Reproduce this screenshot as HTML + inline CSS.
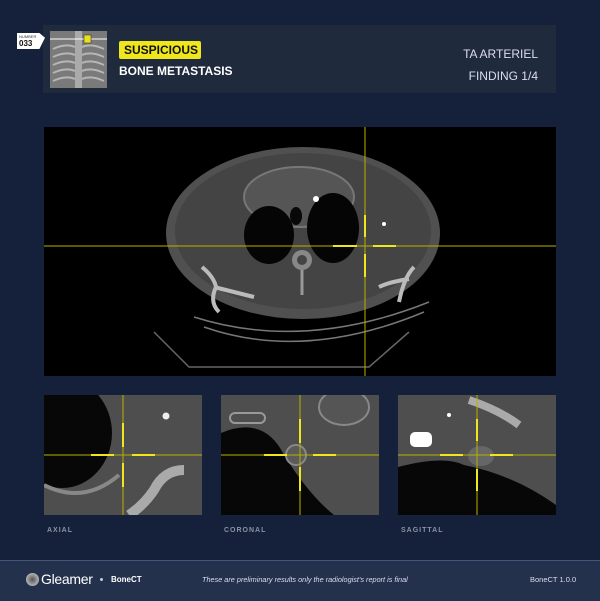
<!DOCTYPE html><html><head><style>
body{margin:0;width:600px;height:600px;background:#15203a;font-family:"Liberation Sans",sans-serif;position:relative;overflow:hidden}
.a{position:absolute}
.lbl{font-size:7px;color:#8a93a5;font-weight:bold;letter-spacing:1px}
</style></head><body>
<div class="a" style="left:43px;top:25px;width:513px;height:68px;background:#1f2a3d"></div>
<div class="a" style="left:50px;top:31px;width:57px;height:57px;background:#777;overflow:hidden">
<svg width="57" height="57"><rect width="57" height="57" fill="#7a7a7a"/><g stroke="#ddd" stroke-width="2" fill="none" opacity=".6"><path d="M3 18 Q16 12 25 16M3 26 Q16 20 25 24M3 34 Q16 28 25 32M3 42 Q16 36 25 40M3 50 Q16 44 25 48M54 18 Q41 12 32 16M54 26 Q41 20 32 24M54 34 Q41 28 32 32M54 42 Q41 36 32 40M54 50 Q41 44 32 48"/></g><rect x="25" y="0" width="7" height="57" fill="#aaa"/><line x1="0" y1="8" x2="57" y2="8" stroke="#fff"/><rect x="34" y="4" width="7" height="8" fill="#e8e020" stroke="#222" stroke-width=".5"/></svg></div>
<div class="a" style="left:17px;top:33px;width:28px;height:16px;background:#fff;clip-path:polygon(0 0,80% 0,100% 30%,80% 100%,0 100%)"></div>
<div class="a" style="left:19px;top:34px;font-size:4px;color:#333">NUMBER</div>
<div class="a" style="left:19px;top:39px;font-size:8px;font-weight:bold;color:#111">033</div>
<div class="a" style="left:119px;top:41px;width:82px;height:18px;background:#f0e61e;border-radius:2px"></div>
<div class="a" style="left:124px;top:43px;font-size:12px;font-weight:bold;color:#111">SUSPICIOUS</div>
<div class="a" style="left:119px;top:64px;font-size:12px;font-weight:bold;color:#fff">BONE METASTASIS</div>
<div class="a" style="right:62px;top:43px;font-size:12px;color:#dde;text-align:right;line-height:22px">TA ARTERIEL<br>FINDING 1/4</div>
<div class="a" style="left:44px;top:127px;width:512px;height:249px;background:#000;overflow:hidden">
<svg width="512" height="249"><path d="M150 190 Q260 225 385 175M160 200 Q260 235 380 185" stroke="#777" stroke-width="1.5" fill="none"/><path d="M110 205 L145 240 L325 240 L365 205" stroke="#666" stroke-width="1.5" fill="none"/>
<ellipse cx="259" cy="106" rx="137" ry="86" fill="#505050"/><ellipse cx="259" cy="104" rx="128" ry="78" fill="#444"/><ellipse cx="255" cy="70" rx="55" ry="30" fill="#555" stroke="#777" stroke-width="2"/>
<ellipse cx="225" cy="108" rx="25" ry="29" fill="#050505"/><ellipse cx="289" cy="101" rx="26" ry="35" fill="#050505"/><ellipse cx="252" cy="89" rx="6" ry="9" fill="#080808"/>
<circle cx="258" cy="133" r="10" fill="#888"/><circle cx="258" cy="133" r="5" fill="#444"/><path d="M258 143v25" stroke="#999" stroke-width="3"/>
<path d="M158 140 Q170 150 172 160 Q165 175 175 185M170 160 Q190 165 210 170M370 140 Q360 150 355 175M365 152 Q345 155 335 160" stroke="#bbb" stroke-width="4" fill="none"/>
<circle cx="272" cy="72" r="3" fill="#fff"/><circle cx="340" cy="97" r="2" fill="#fff"/>
<line x1="0" y1="119" x2="512" y2="119" stroke="#b8b000" stroke-width="1"/><line x1="321" y1="0" x2="321" y2="249" stroke="#b8b000" stroke-width="1"/><path d="M289 119h24M329 119h23M321 88v22M321 127v23" stroke="#f0e61e" stroke-width="2"/></svg></div>
<svg class="a" style="left:44px;top:395px" width="512" height="120">
<rect width="158" height="120" fill="#4e4e4e"/><ellipse cx="18" cy="38" rx="50" ry="55" fill="#070707"/><path d="M85 120 Q100 110 110 95 Q120 75 140 75" stroke="#aaa" stroke-width="10" fill="none"/><path d="M0 90 Q40 110 75 80" stroke="#888" stroke-width="4" fill="none"/><circle cx="122" cy="21" r="3.5" fill="#eee"/>
<rect x="177" width="158" height="120" fill="#4e4e4e"/><path d="M177 38 Q220 20 240 60 Q265 100 290 120 L177 120Z" fill="#070707"/><ellipse cx="252" cy="60" rx="10" ry="10" fill="#5a5a5a" stroke="#888" stroke-width="2"/><ellipse cx="300" cy="12" rx="25" ry="18" fill="#555" stroke="#888" stroke-width="2"/><rect x="186" y="18" width="35" height="10" rx="5" fill="none" stroke="#999" stroke-width="2"/>
<rect x="354" width="158" height="120" fill="#4e4e4e"/><path d="M354 72 Q400 60 420 70 Q470 80 512 110 L512 120 L354 120Z" fill="#070707"/><path d="M425 5 Q455 15 475 30" stroke="#aaa" stroke-width="8" fill="none"/><rect x="366" y="37" width="22" height="15" rx="5" fill="#fff"/><ellipse cx="437" cy="61" rx="13" ry="10" fill="#666"/><circle cx="405" cy="20" r="2" fill="#fff"/>
<g stroke="#b8b000" stroke-width="1"><path d="M0 60h158M79 0v120M177 60h158M256 0v120M354 60h158M433 0v120"/></g>
<g stroke="#f0e61e" stroke-width="2"><path d="M47 60h23M88 60h23M79 28v24M79 68v24M397 60h0M220 60h23M269 60h23M256 24v24M256 72v24M396 60h23M446 60h23M433 24v22M433 74v22"/></g></svg>
<div class="a lbl" style="left:47px;top:527px">AXIAL</div>
<div class="a lbl" style="left:224px;top:527px">CORONAL</div>
<div class="a lbl" style="left:401px;top:527px">SAGITTAL</div>
<div class="a" style="left:0;top:560px;width:600px;height:40px;background:#24314d;border-top:1px solid #46557a"></div>
<div class="a" style="left:26px;top:573px;width:13px;height:13px;border-radius:50%;background:radial-gradient(#555,#ddd)"></div>
<div class="a" style="left:41px;top:571px;font-size:14px;color:#fff;letter-spacing:-0.3px">Gleamer</div>
<div class="a" style="left:100px;top:578px;width:3px;height:3px;border-radius:50%;background:#ccc"></div>
<div class="a" style="left:111px;top:575px;font-size:8px;font-weight:bold;color:#fff">BoneCT</div>
<div class="a" style="left:202px;top:575px;font-size:7.3px;font-style:italic;color:#dde">These are preliminary results only the radiologist's report is final</div>
<div class="a" style="left:530px;top:575px;font-size:7.5px;color:#dde">BoneCT 1.0.0</div>
</body></html>
